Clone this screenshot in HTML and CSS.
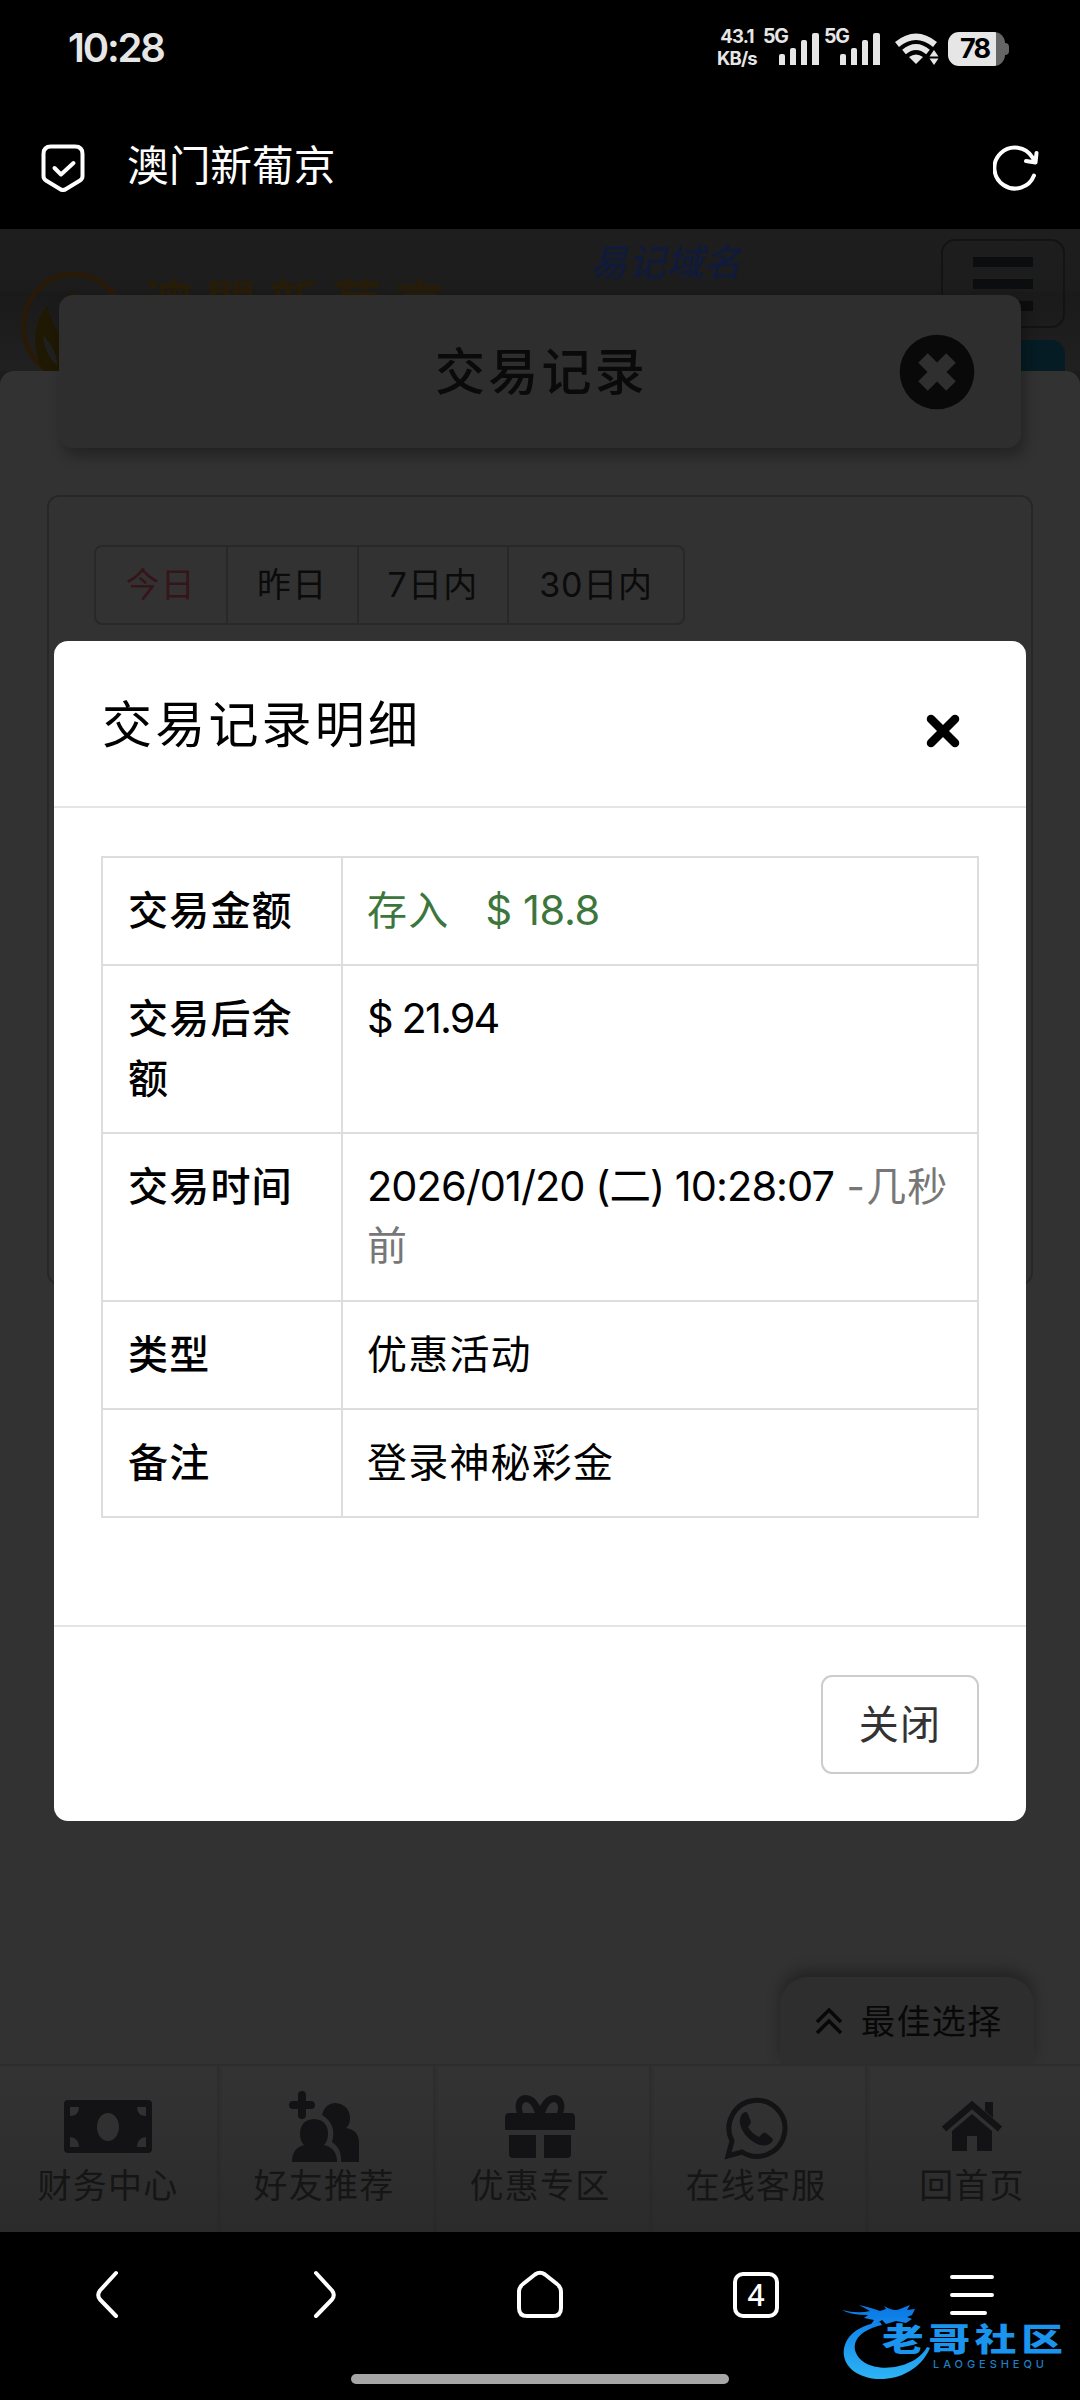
FILE: index.html
```html
<!DOCTYPE html>
<html lang="zh-CN">
<head>
<meta charset="utf-8">
<title>澳门新葡京</title>
<link rel="stylesheet" href="styles.css">
</head>
<body>
<div class="screen">
  <header class="chrome-top">
    <div class="status">
      <span class="clock">10:28</span>
      <div class="status-right">
        <div class="speed"><span>43.1</span><span>KB/s</span></div>
        <div class="sim"><span>5G</span>
          <svg width="42" height="33" viewBox="0 0 42 33"><path d="M1 24a2 2 0 0 1 2-2h2a2 2 0 0 1 2 2v9H1zM12 18a2 2 0 0 1 2-2h2a2 2 0 0 1 2 2v15h-6zM23 10a2 2 0 0 1 2-2h2a2 2 0 0 1 2 2v23h-6zM34 3a2 2 0 0 1 2-2h3a2 2 0 0 1 2 2v30h-7z"/></svg>
        </div>
        <div class="sim sim-two"><span>5G</span>
          <svg width="42" height="33" viewBox="0 0 42 33"><path d="M1 24a2 2 0 0 1 2-2h2a2 2 0 0 1 2 2v9H1zM12 18a2 2 0 0 1 2-2h2a2 2 0 0 1 2 2v15h-6zM23 10a2 2 0 0 1 2-2h2a2 2 0 0 1 2 2v23h-6zM34 3a2 2 0 0 1 2-2h3a2 2 0 0 1 2 2v30h-7z"/></svg>
        </div>
        <svg class="wifi" width="46" height="33" viewBox="0 0 46 33"><g fill="none" stroke="#e6e6e6" stroke-width="6.2"><path d="M3 12.5Q22 -3 41 12.5"/><path d="M10 20Q22 10 34 20" stroke-width="5.6"/></g><path d="M15 25q7-5 14 0l-7 7z"/><path d="M40 18l4.500 6.500h-9zM40 33l4.500-6.500h-9z"/></svg>
        <div class="battery"><span>78</span></div>
      </div>
    </div>
    <div class="address">
      <svg width="44" height="48" viewBox="0 0 44 48"><path d="M10 2.500h24q7.500 0 7.500 7.500v22q0 3-2.500 4.500L25 45q-3 2-6 0L5 36.500Q2.500 35 2.500 32V10Q2.500 2.500 10 2.500z"/><path d="M13.500 24l6.500 6.500L32.500 19"/></svg>
      <h1>澳门新葡京</h1>
      <svg class="reload" width="46" height="46" viewBox="0 0 46 46"><path d="M41 30.500A20.500 20.500 0 1 1 39.500 12.500L42 16.500M43.500 8L42.500 17.500L33 16"/></svg>
    </div>
  </header>

  <div class="page">
    <div class="site-header">
      <svg class="logo" width="460" height="142" viewBox="0 0 460 142">
        <ellipse cx="73.500" cy="97" rx="50" ry="52" fill="none" stroke="#291a07" stroke-width="5"/>
        <path d="M47 77C30 96 32 130 48 148L76 148L76 120Q56 110 47 77z" fill="#1f1803"/>
        <path d="M74 62Q88 76 90 88L60 88Q64 72 74 62z" fill="#291a07"/>
        <path d="M43 106Q44 125 57 137Q58 122 43 106z" fill="#202020"/>
        <text x="143" y="93" textLength="302">澳門新葡京</text>
      </svg>
      <span class="domain">易记域名</span>
      <div class="menu-side">
        <div class="burger"><i></i><i></i><i></i></div>
        <div class="teal"></div>
      </div>
    </div>
    <main class="sheet">
      <div class="title-card">
        <h2>交易记录</h2>
        <svg width="76" height="76" viewBox="0 0 76 76"><circle cx="38" cy="38" r="37.300" fill="#090909"/><path d="M24 24L52 52M52 24L24 52" stroke="#2f2f2f" stroke-width="13.500"/></svg>
      </div>
      <section class="records">
        <div class="range"><span class="on">今日</span><span>昨日</span><span>7日内</span><span>30日内</span></div>
      </section>
      <div class="best">
        <svg width="28" height="28" viewBox="0 0 28 28"><path d="M2 15L14 3L26 15M2 26L14 14L26 26"/></svg>
        <span>最佳选择</span>
      </div>
    </main>
    <nav class="tabs">
      <a><svg width="90" height="66" viewBox="0 0 90 66"><path fill-rule="evenodd" d="M5 6h80q4 0 4 4v45q0 4-4 4H5q-4 0-4-4V10q0-4 4-4zM45 19c-6 0-11 6-11 14s5 14 11 14 11-6 11-14-5-14-11-14zM7 13v9q9 0 9-9zM83 13v9q-9 0-9-9zM7 53v-10q9 1 9 10zM83 53v-10q-9 1-9 10z"/></svg><span>财务中心</span></a>
      <a><svg width="72" height="74" viewBox="0 0 72 74"><path d="M10 5a4 4 0 0 1 8 0v6h5a4 4 0 0 1 0 8h-5v6a4 4 0 0 1-8 0v-6h-5a4 4 0 0 1 0-8h5z"/><path d="M34 25Q37 13 48 13Q62 15 62 29Q62 35 58 38Q71 40 71 53V72H53V68Q53 58 44 52Q49 34 34 25z"/><path d="M26 29Q40 30 40 44Q40 51 36 55Q49 58 49 72H4Q4 58 16 55Q12 51 12 44Q12 30 26 29z"/></svg><span>好友推荐</span></a>
      <a><svg width="72" height="68" viewBox="0 0 72 68"><path fill-rule="evenodd" d="M13 20C9 10 14 2 22 2Q30 2 36 13Q42 2 50 2C58 2 63 10 59 20H67Q71 20 71 24V37H1V24Q1 20 5 20zM19 20H31Q27 9 22 9Q16 10 19 20zM41 20H53Q56 10 50 9Q45 9 41 20z"/><path d="M5 42H32V65H9Q5 65 5 61zM40 42H67V61Q67 65 63 65H40z"/></svg><span>优惠专区</span></a>
      <a><svg width="64" height="66" viewBox="0 0 64 66"><path fill="none" stroke="#131315" stroke-width="5" d="M4 62L8 47A28 28 0 1 1 18 58Z"/><path d="M18 20q4-4 6 0l3 8q0 2-3 5 4 7 11 10l4-4q2-1 4 1l5 4q2 2-1 5-6 5-16 0-12-7-15-19-1-6 2-10z"/></svg><span>在线客服</span></a>
      <a><svg width="62" height="58" viewBox="0 0 62 58"><path fill="none" stroke="#131315" stroke-width="6.500" d="M3 31L31 7L59 31"/><path d="M44 4h8v16l-8-7zM31 16L51 33V53H36V38H26V53H11V33z"/></svg><span>回首页</span></a>
    </nav>

    <div class="modal">
      <div class="modal-head">
        <h3>交易记录明细</h3>
        <svg width="34" height="34" viewBox="0 0 34 34"><path d="M5 5L29 29M29 5L5 29"/></svg>
      </div>
      <div class="modal-body">
        <table>
          <tr><th>交易金额</th><td class="in">存入<b class="amount">$ 18.8</b></td></tr>
          <tr class="tall"><th>交易后余额</th><td><b class="balance">$ 21.94</b></td></tr>
          <tr class="tall"><th>交易时间</th><td><b>2026/01/20 (二) 10:28:07</b><span class="ago"> -几秒前</span></td></tr>
          <tr><th>类型</th><td>优惠活动</td></tr>
          <tr><th>备注</th><td>登录神秘彩金</td></tr>
        </table>
      </div>
      <div class="modal-foot"><button>关闭</button></div>
    </div>
  </div>

  <footer class="chrome-bottom">
    <svg viewBox="0 0 60 60" width="60" height="60"><path d="M38 9L22 26.500Q18.500 31 22 35.500L38 52"/></svg>
    <svg viewBox="0 0 60 60" width="60" height="60"><path d="M22 9L38 26.500Q41.500 31 38 35.500L22 52"/></svg>
    <svg viewBox="0 0 60 60" width="60" height="60"><path d="M9 28Q9 23 13 20L25 10.500Q30 7 35 10.500L47 20Q51 23 51 28V44Q51 52 43 52H17Q9 52 9 44z"/></svg>
    <span class="count">4</span>
    <svg viewBox="0 0 60 60" width="60" height="60"><path d="M10 13H50M10 31H50M10 49H43"/></svg>
    <i class="handle"></i>
    <svg class="mark" width="240" height="90" viewBox="0 0 240 90">
      <defs><linearGradient id="blue" x1="0" y1="0" x2="0" y2="80" gradientUnits="userSpaceOnUse"><stop offset=".1" stop-color="#0b7ae6"/><stop offset="1" stop-color="#2fb6f5"/></linearGradient></defs>
      <path d="M40 20C14 24 2 38 4 54C9 84 72 88 90 46L87 45C74 70 22 74 15 48C13 36 24 27 42 23z"/>
      <path d="M2 8Q18 12 30 9L19 3Q32 6 40 9L46 7L44 4Q54 10 60 7L70 3L67 8L75 7L72 13L67 15L72 17L66 21L56 19L46 22L42 18L34 23L30 24L34 18L24 16L28 13Q10 13 2 8z"/>
      <g class="mark-title" transform="translate(42 49) scale(1.190 .9)"><text textLength="152">老哥社区</text></g>
      <text class="mark-sub" x="93" y="66" textLength="111">LAOGESHEQU</text>
    </svg>
  </footer>
</div>
</body>
</html>
```
FILE: styles.css
```css
* { box-sizing: border-box; margin: 0; padding: 0; }
body { background: #000; font-family: Inter, "Noto Sans CJK SC", sans-serif; }
svg { display: block; flex: none; }
h1, h2, h3 { font-weight: 400; white-space: nowrap; }
.screen { width: 1080px; height: 2400px; display: flex; flex-direction: column; overflow: hidden; background: #000; }

.chrome-top { height: 229px; display: flex; flex-direction: column; }
.status { height: 95px; padding: 0 71px 0 68px; display: flex; justify-content: space-between; align-items: center; color: #e6e6e6; }
.clock { font-size: 40px; font-weight: 600; letter-spacing: -2.2px; }
.status-right { display: flex; align-items: flex-start; height: 38px; }
.speed { width: 47px; padding-right: 3px; display: flex; flex-direction: column; font-size: 18.5px; font-weight: 700; line-height: 22px; letter-spacing: -.8px; text-align: center; margin-top: -4px; white-space: nowrap; }
.sim { position: relative; width: 61px; height: 38px; padding: 3px 0 0 16px; fill: #e6e6e6; }
.sim span { position: absolute; left: 1px; top: -3px; font-size: 19.5px; line-height: 20px; font-weight: 700; letter-spacing: -1.2px; }
.sim-two { margin-right: 10px; }
.wifi { fill: #e6e6e6; margin-top: 3px; }
.battery { position: relative; width: 57px; height: 34px; margin: 3px 4px 0 8px; border-radius: 11px; background: linear-gradient(90deg, #e6e6e6 48px, #666 48px); display: flex; align-items: center; padding-left: 12px; color: #000; font-size: 27px; font-weight: 700; letter-spacing: -1.8px; }
.battery::after { content: ""; position: absolute; right: -4px; top: 11px; width: 4px; height: 12px; border-radius: 0 4px 4px 0; background: #666; }
.address { height: 134px; display: flex; align-items: center; padding: 16px 41px 14px 41px; }
.address svg { fill: none; stroke: #fff; stroke-width: 4; stroke-linecap: round; stroke-linejoin: round; margin-top: 10px; }
.address h1 { color: #fff; font-size: 41.7px; margin-left: 42px; line-height: 60px; flex: 1; margin-top: 6px; }

.page { position: relative; height: 2003px; display: flex; flex-direction: column; background: #1c1c1c; }
.site-header { height: 142px; display: flex; background: linear-gradient(#1e1e1e, #1c1c1c 61px, #1a1a1a 64px, #202020); }
.logo text { font-family: "Noto Sans CJK TC"; font-size: 50px; font-weight: 700; fill: #261c07; }
.domain { margin: 0 auto 0 130px; font-size: 37px; letter-spacing: 1px; line-height: 68px; font-style: italic; font-weight: 500; color: #101a3a; white-space: nowrap; }
.menu-side { width: 139px; display: flex; flex-direction: column; align-items: flex-start; gap: 12px; padding-top: 10px; }
.burger { width: 124px; height: 89px; border: 2px solid #131313; border-radius: 14px; display: flex; flex-direction: column; align-items: center; gap: 12px; padding-top: 16px; }
.burger i { width: 60px; height: 10px; background: #0b0d0f; }
.teal { width: 124px; height: 31px; border-radius: 14px 14px 0 0; background: #051c24; }
.sheet { position: relative; height: 1693px; background: #323232; border-radius: 14px 14px 0 0; display: flex; flex-direction: column; align-items: center; }
.title-card { position: relative; width: 962px; height: 153px; flex: none; margin-top: -76px; border-radius: 14px; background: #2e2e2e; box-shadow: 4px 8px 14px rgba(0,0,0,.3); display: flex; align-items: center; padding-right: 46px; }
.title-card h2 { flex: 1; font-size: 50px; font-weight: 500; letter-spacing: 3.200px; text-align: center; padding-left: 125px; color: #0a0a0a; line-height: 76px; }
.records { width: 986px; height: 790px; flex: none; margin-top: 47px; border: 2px solid #272727; border-radius: 12px; padding: 48px 46px; }
.range { display: inline-flex; height: 80px; margin-left: -1px; border: 2px solid #282828; border-radius: 8px; font-size: 34px; letter-spacing: 1.300px; line-height: 75px; color: #0b0b0b; white-space: nowrap; }
.range span { width: 131.500px; text-align: center; border-right: 2px solid #282828; }
.range span:nth-child(3) { width: 150px; }
.range span:nth-child(4) { width: 174px; border: 0; letter-spacing: .8px; }
.range .on { color: #351519; }
.best { margin: auto 46px 0 auto; width: 254px; height: 87px; border-radius: 28px 28px 0 0; background: #2e2e2e; box-shadow: 0 -7px 14px rgba(0,0,0,.3); display: flex; align-items: center; padding: 0 0 2px 35px; gap: 18px; font-size: 34px; letter-spacing: 1.400px; color: #080808; white-space: nowrap; }
.best svg { fill: none; stroke: #080808; stroke-width: 3.6; margin-top: 2px; }
.tabs { position: relative; height: 168px; display: grid; grid-template-columns: repeat(5, 1fr); background: linear-gradient(#333, #2b2b2b); border-top: 2px solid #2d2d2d; }
.tabs a { display: flex; flex-direction: column; align-items: center; fill: #131315; font-size: 34px; letter-spacing: 1.200px; color: #151515; white-space: nowrap; }
.tabs a + a { background: linear-gradient(90deg, rgba(36,36,36,.4), rgba(36,36,36,.1)) 1px 0 / 5px 100% no-repeat; }
.tabs svg { height: 74px; margin-top: 24px; }
.tabs span { line-height: 46px; margin-top: -1px; }

.modal { position: absolute; left: 54px; top: 412px; width: 972px; height: 1180px; border-radius: 14px; background: #fff; display: flex; flex-direction: column; color: #000; }
.modal-head { height: 167px; border-bottom: 2px solid #e5e5e5; display: flex; align-items: center; justify-content: space-between; padding: 0 66px 0 48px; }
.modal-head h3 { font-size: 50px; letter-spacing: 3.200px; line-height: 70px; padding-top: 2px; }
.modal-head svg { fill: none; stroke: #000; stroke-width: 8.500; stroke-linecap: round; margin-top: 14px; }
.modal-body { height: 817px; padding: 48px 47px 0; }
table { width: 878px; border-collapse: collapse; table-layout: fixed; font-size: 40px; letter-spacing: 1.200px; }
tr { height: 108.300px; }
tr.tall { height: 167.700px; }
th, td { border: 2px solid #ddd; padding: 23px 22px 0 24px; line-height: 59.300px; text-align: left; vertical-align: top; font-weight: 400; }
th { width: 240px; font-weight: 500; padding-left: 25px; }
td b { font-weight: 400; font-size: 41.500px; letter-spacing: -.95px; line-height: 50px; }
td .amount { margin-left: 36px; letter-spacing: -.35px; }
td .balance { letter-spacing: -1.9px; }
.in { color: #3c763d; }
.ago { color: #777; }
.modal-foot { height: 196px; border-top: 2px solid #e5e5e5; display: flex; justify-content: flex-end; padding: 48px 47px 0 0; }
button { width: 158px; height: 99px; border: 2px solid #ccc; border-radius: 11px; background: #fff; color: #333; font: 40px Inter, "Noto Sans CJK SC", sans-serif; letter-spacing: 1.200px; padding-bottom: 6px; }

.chrome-bottom { position: relative; height: 168px; display: grid; grid-template-columns: repeat(5, 1fr); justify-items: center; align-items: start; padding-top: 32px; }
.chrome-bottom > svg:not(.mark) { fill: none; stroke: #fff; stroke-width: 4; stroke-linecap: round; stroke-linejoin: round; }
.count { width: 46px; height: 46px; margin-top: 8px; border: 4px solid #fff; border-radius: 10px; color: #fff; font: 500 30px/37px "Noto Sans", sans-serif; text-align: center; }
.handle { position: absolute; left: 351px; bottom: 16px; width: 378px; height: 10px; border-radius: 5px; background: #a6a6a6; }
.mark { position: absolute; left: 840px; top: 70px; fill: url(#blue); }
.mark-title text { font-family: "Noto Sans CJK SC"; font-size: 35px; font-weight: 900; fill: #1b94ee; }
.mark-sub { font-family: Inter; font-size: 11px; fill: #1f7fc0; font-weight: 500; }
```
